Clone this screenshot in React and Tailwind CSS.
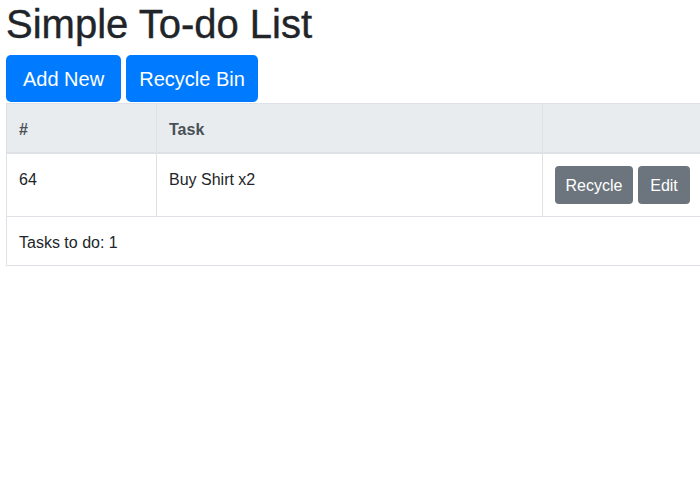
import React, { useState } from "react";

const App = () => {

  const [tasks] = useState([{ id: 64, name: "Buy Shirt x2" }]);

  return (

    <div
      className="w-[700px] h-[500px] overflow-hidden bg-white text-[#212529] px-[6px]"
      style={{ fontFamily: '"Liberation Sans", Arial, sans-serif' }}
    >

      <h1 className="text-[40px] leading-[48px] font-medium mb-[7px] [-webkit-text-stroke:0.4px_#212529]">
        Simple To-do List
      </h1>

      <div className="flex gap-[5px]">
        <button className="h-[47px] w-[115px] pt-px text-[20px] text-white bg-[#007bff] rounded-[5px]">
          Add New
        </button>
        <button className="h-[47px] w-[132px] pt-px text-[20px] text-white bg-[#007bff] rounded-[5px]">
          Recycle Bin
        </button>
      </div>

      <table className="mt-px w-[900px] border-collapse border border-[#dee2e6] text-base leading-6 table-fixed">
        <thead>
          <tr className="bg-[#e9ecef] text-[#495057]">
            <th className="w-[150px] text-left font-bold px-3 pt-[14px] pb-[10px] border border-[#dee2e6] border-b-2">#</th>
            <th className="w-[386px] text-left font-bold px-3 pt-[14px] pb-[10px] border border-[#dee2e6] border-b-2">Task</th>
            <th className="p-3 border border-[#dee2e6] border-b-2"></th>
          </tr>
        </thead>
        <tbody>
          {tasks.map((task) => (
            <tr key={task.id}>
              <td className="align-top px-3 pt-[14px] pb-[10px] border border-[#dee2e6]">{task.id}</td>
              <td className="align-top px-3 pt-[14px] pb-[10px] border border-[#dee2e6]">{task.name}</td>
              <td className="align-top p-3 border border-[#dee2e6]">
                <div className="flex gap-[5px]">
                  <button className="h-[38px] w-[78px] pt-px text-base text-white bg-[#6c757d] rounded-[4px]">
                    Recycle
                  </button>
                  <button className="h-[38px] w-[52px] pt-px text-base text-white bg-[#6c757d] rounded-[4px]">
                    Edit
                  </button>
                </div>
              </td>
            </tr>
          ))}
        </tbody>
        <tfoot>
          <tr>
            <td colSpan={3} className="px-3 pt-[14px] pb-[10px] border border-[#dee2e6]">
              Tasks to do: {tasks.length}
            </td>
          </tr>
        </tfoot>
      </table>

    </div>

  );

};

export default App;
